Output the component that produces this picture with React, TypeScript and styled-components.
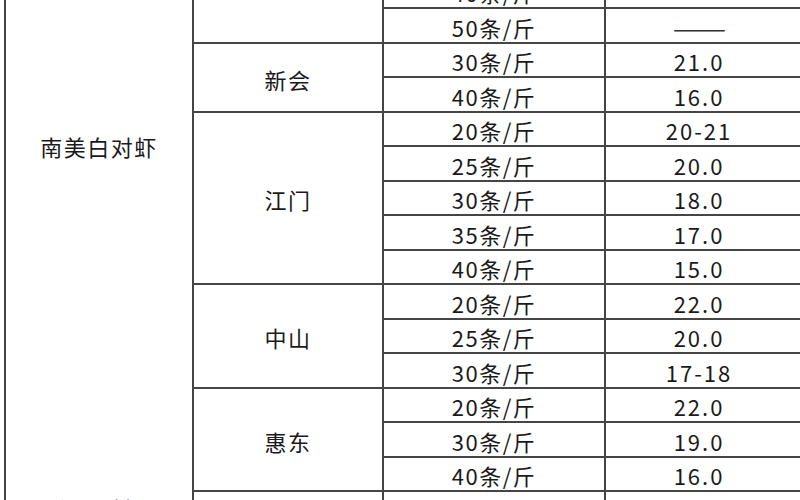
import React from "react";
import styled, { createGlobalStyle } from "styled-components";

const GlobalStyle = createGlobalStyle`
  html, body {
    margin: 0;
    padding: 0;
    background: #ffffff;
  }
  body {
    font-family: "Noto Sans CJK SC", "Noto Sans", sans-serif;
    color: #1a1a1a;
  }
`;

const Page = styled.div`
  width: 800px;
  height: 500px;
  overflow: hidden;
  background: #ffffff;
`;

const Table = styled.div`
  display: grid;
  grid-template-columns: 188px 190px 222px 1fr;
  grid-template-rows: repeat(16, 34.5px);
  width: 820px;
  margin: -25.5px 0 0 4px;
  border-left: 2px solid #454545;
`;

const Cell = styled.div<{ $col: number; $row: number; $span?: number; $open?: boolean }>`
  grid-column: ${(p) => p.$col};
  grid-row: ${(p) => p.$row} / span ${(p) => p.$span ?? 1};
  box-sizing: border-box;
  display: flex;
  align-items: center;
  justify-content: center;
  padding-top: 3px;
  border-right: 2px solid #454545;
  border-bottom: ${(p) => (p.$open ? "none" : "2px solid #454545")};
  font-size: 22px;
  line-height: 1;
  letter-spacing: 1.5px;
  white-space: nowrap;
`;

const NameCell = styled(Cell)`
  padding-top: 0;
  padding-bottom: 2px;
`;

const PriceCell = styled(Cell)`
  padding-right: 32px;
  letter-spacing: 2px;
`;

const Dash = styled.span`
  display: inline-block;
  letter-spacing: 0;
  color: #333333;
  transform: scaleX(1.45);
`;

type Span = { row: number; span: number; text: string; open?: boolean };

const species: Span[] = [
  { row: 1, span: 10, text: "南美白对虾", open: true },
  { row: 11, span: 5, text: "", open: true },
  { row: 16, span: 1, text: "斑节对虾", open: true },
];

const places: Span[] = [
  { row: 1, span: 2, text: "" },
  { row: 3, span: 2, text: "新会" },
  { row: 5, span: 5, text: "江门" },
  { row: 10, span: 3, text: "中山" },
  { row: 13, span: 3, text: "惠东" },
  { row: 16, span: 1, text: "" },
];

const sizes = [
  "40条/斤", "50条/斤", "30条/斤", "40条/斤",
  "20条/斤", "25条/斤", "30条/斤", "35条/斤", "40条/斤",
  "20条/斤", "25条/斤", "30条/斤",
  "20条/斤", "30条/斤", "40条/斤",
  "20条/斤",
];

// "——" marks a size with no quote
const prices = [
  "——", "——", "21.0", "16.0",
  "20-21", "20.0", "18.0", "17.0", "15.0",
  "22.0", "20.0", "17-18",
  "22.0", "19.0", "16.0",
  "22.0",
];

export default function App() {
  return (
    <Page>
      <GlobalStyle />
      <Table>
        {species.map((s) => (
          <NameCell key={`s${s.row}`} $col={1} $row={s.row} $span={s.span} $open={s.open}>
            {s.text}
          </NameCell>
        ))}
        {places.map((p) => (
          <Cell key={`p${p.row}`} $col={2} $row={p.row} $span={p.span}>
            {p.text}
          </Cell>
        ))}
        {sizes.map((t, i) => (
          <Cell key={`z${i}`} $col={3} $row={i + 1}>
            {t}
          </Cell>
        ))}
        {prices.map((t, i) => (
          <PriceCell key={`v${i}`} $col={4} $row={i + 1}>
            {t === "——" ? <Dash>{t}</Dash> : t}
          </PriceCell>
        ))}
      </Table>
    </Page>
  );
}
